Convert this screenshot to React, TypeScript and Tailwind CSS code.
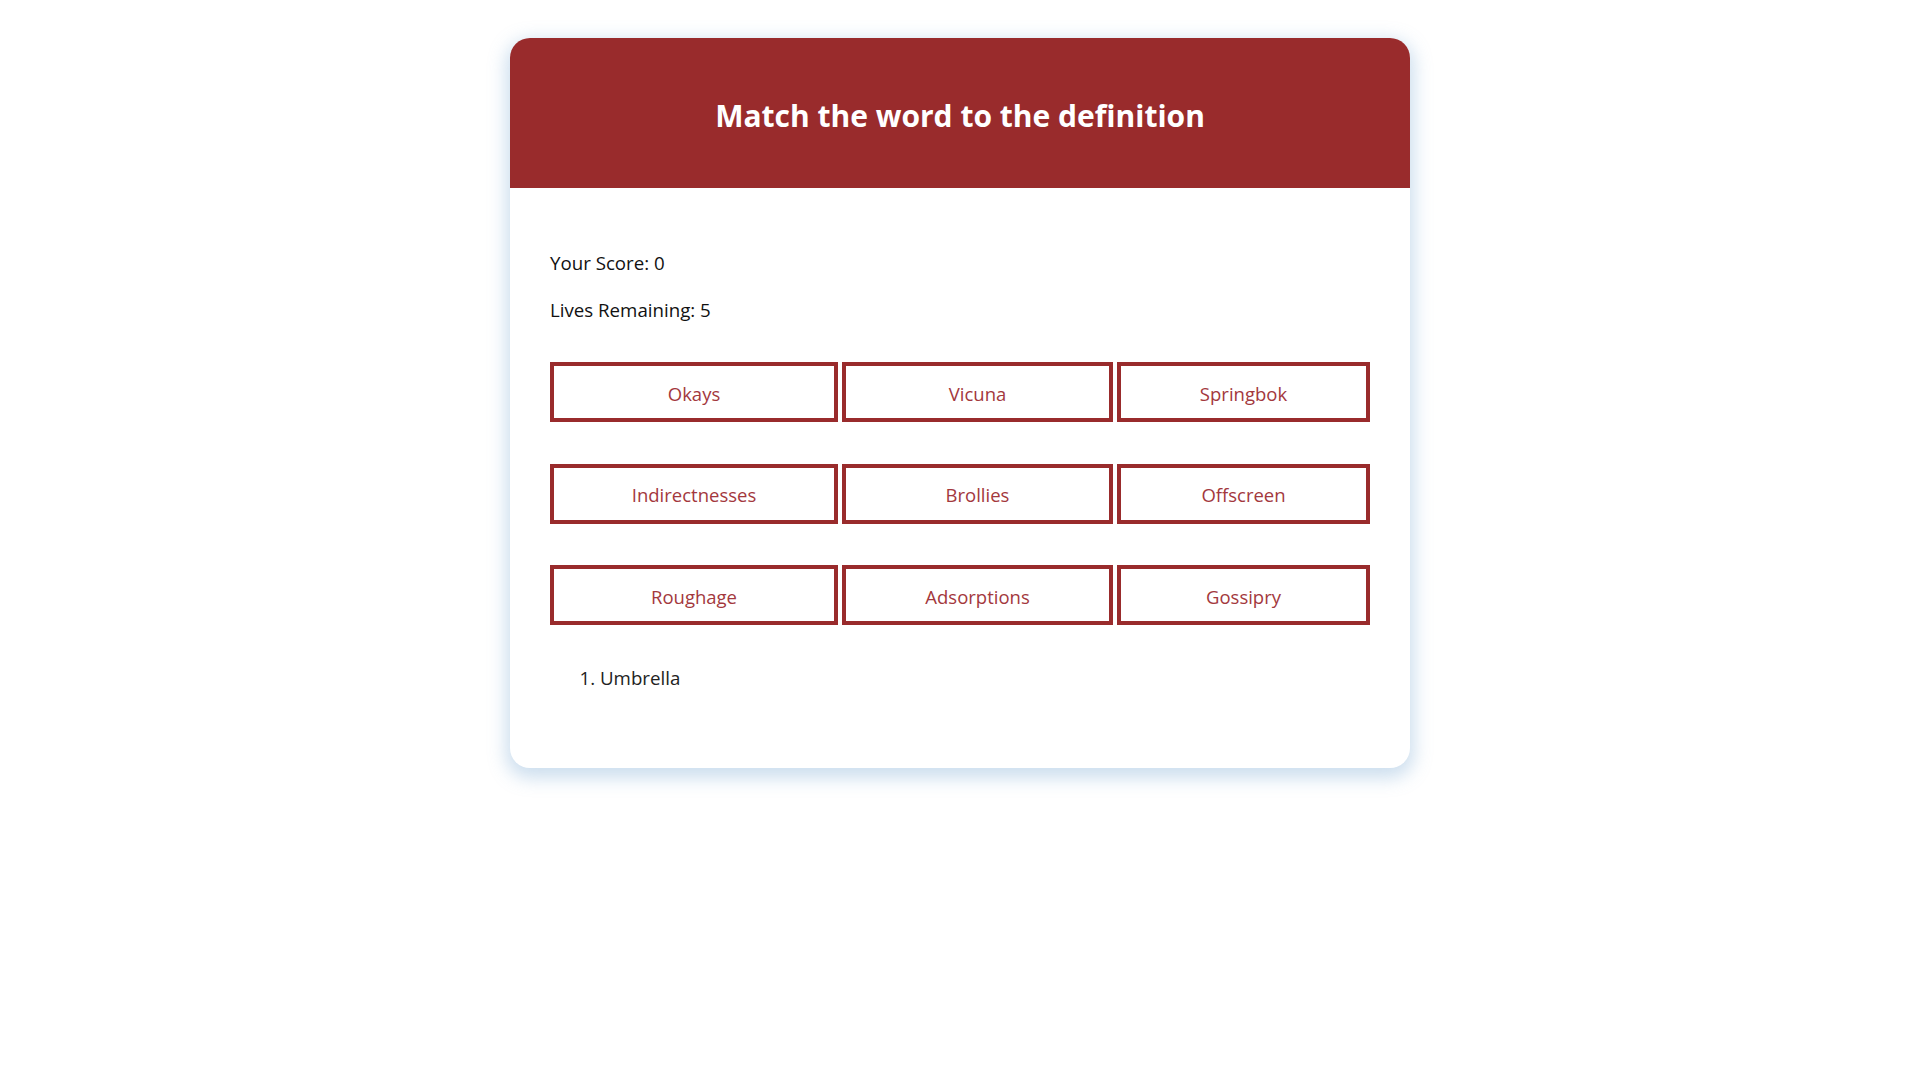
import React from "react";

const words = [
  "Okays",
  "Vicuna",
  "Springbok",
  "Indirectnesses",
  "Brollies",
  "Offscreen",
  "Roughage",
  "Adsorptions",
  "Gossipry",
];

export default function App() {
  return (
    <div
      className="min-h-[1080px] w-full bg-white pt-[38px]"
      style={{ fontFamily: '"Open Sans", "Noto Sans", sans-serif' }}
    >
      <div className="mx-auto w-[900px] overflow-hidden rounded-[20px] bg-white shadow-[0_6px_18px_4px_rgba(110,160,205,0.35)]">
        <div className="flex h-[150px] items-center justify-center bg-[#992b2c] pt-[6px]">
          <h1 className="text-[30px] font-bold leading-none text-white">
            Match the word to the definition
          </h1>
        </div>
        <div className="px-[40px] pt-[63px] pb-[78px] text-[#111]">
          <p className="text-[18.7px] leading-[24px]">Your Score: 0</p>
          <p className="mt-[23px] text-[18.7px] leading-[24px]">Lives Remaining: 5</p>
          <div className="mt-[40px] grid grid-cols-[288px_271px_253px] gap-x-[4px] gap-y-[41.5px]">
            {words.map((w) => (
              <button
                key={w}
                className="flex h-[60px] items-center justify-center border-4 border-[#992b2c] bg-white pt-[3px] text-[18.5px] text-[#a3383d]"
              >
                {w}
              </button>
            ))}
          </div>
          <ol className="mt-[41px] list-decimal pl-[50px] text-[18.7px] leading-[24px] text-[#222]">
            <li>Umbrella</li>
          </ol>
        </div>
      </div>
    </div>
  );
}
